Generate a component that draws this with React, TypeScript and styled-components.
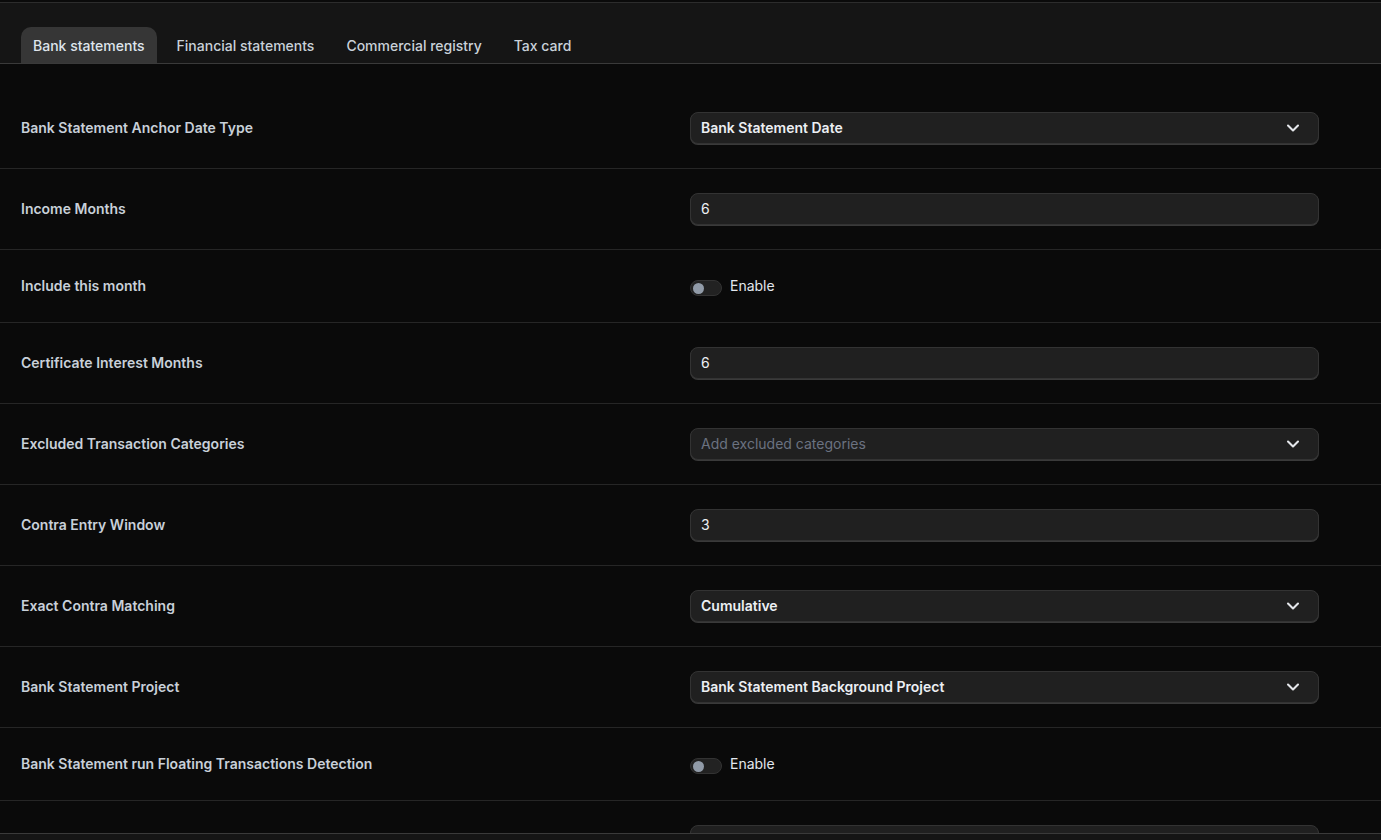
import React from "react";
import styled, { createGlobalStyle } from "styled-components";

const Global = createGlobalStyle`
  html, body { margin: 0; padding: 0; height: 100%; background: #0a0a0a; overflow: hidden; }
  * { box-sizing: border-box; }
`;

const Page = styled.div`
  width: 1381px;
  height: 840px;
  display: flex;
  flex-direction: column;
  background: #0a0a0a;
  font-family: Inter, "Liberation Sans", sans-serif;
  font-size: 14px;
  overflow: hidden;
`;

const TabBar = styled.nav`
  flex: none;
  height: 64px;
  display: flex;
  align-items: flex-end;
  gap: 8px;
  padding-left: 21px;
  background: #151515;
  border-top: 2px solid #0a0a0a;
  border-bottom: 1px solid #3a3a3a;
  box-shadow: inset 0 1px 0 #2c2c2c;
`;

const Tab = styled.button<{ $active?: boolean }>`
  height: 36px;
  padding: 0 12px;
  border: 0;
  border-radius: 10px 10px 0 0;
  background: ${(p) => (p.$active ? "#363636" : "transparent")};
  color: ${(p) => (p.$active ? "#dfe5ec" : "#c9d1d9")};
  font: 500 14px Inter, "Liberation Sans", sans-serif;
`;

const Content = styled.main`
  flex: 1;
  min-height: 0;
  padding-top: 24px;
  overflow: hidden;
`;

const Row = styled.section`
  display: flex;
  align-items: flex-start;
  padding: 24px 62px 24px 21px;
  border-bottom: 1px solid #262626;
`;

const Label = styled.label`
  width: 669px;
  flex: none;
  line-height: 32px;
  font-weight: 600;
  color: #c8d0d9;
`;

const CompactLabel = styled(Label)`
  line-height: 24px;
`;

const Field = styled.div<{ $bold?: boolean; $placeholder?: boolean }>`
  flex: 1;
  height: 32px;
  display: flex;
  align-items: center;
  justify-content: space-between;
  padding: 0 15px 2px 10px;
  border: 1px solid #333;
  border-radius: 8px;
  box-shadow: 0 1px 0 #3a3a3a;
  background: #202020;
  color: ${(p) => (p.$placeholder ? "#6b7280" : "#eceff3")};
  font-weight: ${(p) => (p.$bold ? 600 : 400)};
`;

const Chevron = styled.svg`
  width: 20px;
  height: 20px;
  margin-top: 2px;
  fill: none;
  stroke: #e5e7eb;
  stroke-width: 2.5;
  stroke-linecap: round;
  stroke-linejoin: round;
`;

const ToggleWrap = styled.div`
  display: flex;
  align-items: flex-start;
  gap: 8px;
  height: 24px;
  color: #e2e7ed;
`;

const ToggleText = styled.span`
  margin-top: 1px;
  line-height: 22px;
`;

const Track = styled.span`
  width: 32px;
  height: 16px;
  margin-top: 6px;
  display: flex;
  align-items: center;
  padding-left: 2px;
  border: 1px solid #333;
  border-radius: 8px;
  background: #222;
`;

const Thumb = styled.span`
  width: 11px;
  height: 11px;
  border-radius: 50%;
  background: #919ba8;
`;

const Footer = styled.footer`
  flex: none;
  height: 7px;
  background: #151515;
  border-top: 1px solid #3a3a3a;
`;

type Item =
  | { label: string; kind: "select"; value: string; placeholder?: boolean }
  | { label: string; kind: "input"; value: string }
  | { label: string; kind: "toggle" };

const items: Item[] = [
  { label: "Bank Statement Anchor Date Type", kind: "select", value: "Bank Statement Date" },
  { label: "Income Months", kind: "input", value: "6" },
  { label: "Include this month", kind: "toggle" },
  { label: "Certificate Interest Months", kind: "input", value: "6" },
  { label: "Excluded Transaction Categories", kind: "select", value: "Add excluded categories", placeholder: true },
  { label: "Contra Entry Window", kind: "input", value: "3" },
  { label: "Exact Contra Matching", kind: "select", value: "Cumulative" },
  { label: "Bank Statement Project", kind: "select", value: "Bank Statement Background Project" },
  { label: "Bank Statement run Floating Transactions Detection", kind: "toggle" },
];

const tabs = ["Bank statements", "Financial statements", "Commercial registry", "Tax card"];

export default function App() {
  return (
    <Page>
      <Global />
      <TabBar>
        {tabs.map((t, i) => (
          <Tab key={t} $active={i === 0}>{t}</Tab>
        ))}
      </TabBar>
      <Content>
        {items.map((it) => (
          <Row key={it.label}>
            {it.kind === "toggle" ? (
              <>
                <CompactLabel>{it.label}</CompactLabel>
                <ToggleWrap>
                  <Track><Thumb /></Track>
                  <ToggleText>Enable</ToggleText>
                </ToggleWrap>
              </>
            ) : (
              <>
                <Label>{it.label}</Label>
                {it.kind === "select" ? (
                  <Field $bold={!it.placeholder} $placeholder={it.placeholder}>
                    {it.value}
                    <Chevron viewBox="0 0 24 24"><path d="m6 9 6 6 6-6" /></Chevron>
                  </Field>
                ) : (
                  <Field>{it.value}</Field>
                )}
              </>
            )}
          </Row>
        ))}
        <Row>
          <Label />
          <Field />
        </Row>
      </Content>
      <Footer />
    </Page>
  );
}
